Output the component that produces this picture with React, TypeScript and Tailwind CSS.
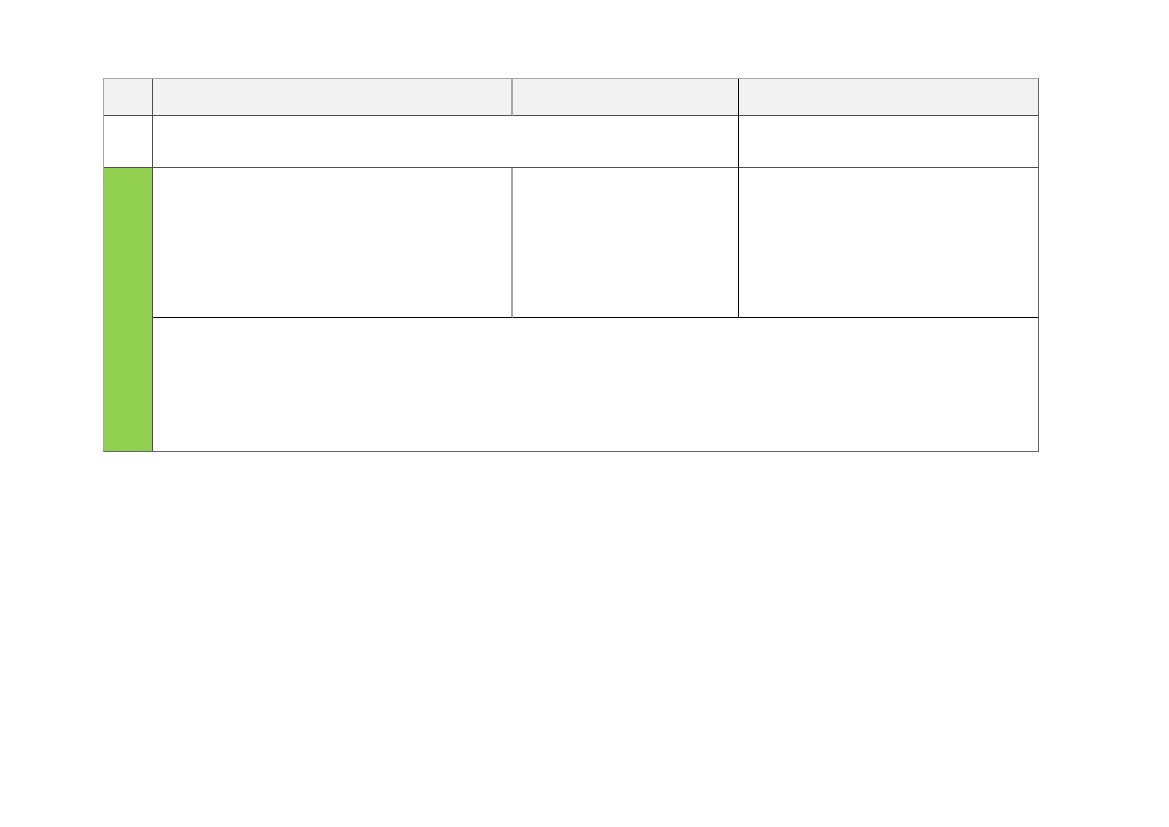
export default function App() {
  return (
    <div className="min-h-screen w-full bg-white pt-[78px] pl-[103px]">
      <div className="grid w-[936px] grid-cols-[49px_360px_226px_299px] grid-rows-[37px_52px_150px_133px] border border-t-[#a6a6a6] border-l-[#a6a6a6] border-r-[#666666] border-b-[#666666]">
        {/* header */}
        <div className="border-r border-b border-r-[#4d4d4d] border-b-[#4d4d4d] bg-[#f2f2f2]" />
        <div className="border-r-2 border-b border-r-[#a6a6a6] border-b-[#4d4d4d] bg-[#f2f2f2]" />
        <div className="border-r border-b border-r-black border-b-[#4d4d4d] bg-[#f2f2f2]" />
        <div className="border-b border-b-[#4d4d4d] bg-[#f2f2f2]" />

        {/* row 2 */}
        <div className="border-r border-b border-r-[#4d4d4d] border-b-[#4d4d4d]" />
        <div className="col-span-2 border-r border-b border-r-black border-b-[#4d4d4d]" />
        <div className="border-b border-b-[#4d4d4d]" />

        {/* row 3 */}
        <div className="row-span-2 border-r border-r-[#4d4d4d] bg-[#92d050]" />
        <div className="border-r-2 border-b border-r-[#a6a6a6] border-b-black" />
        <div className="border-r border-b border-r-black border-b-black" />
        <div className="border-b border-b-black" />

        {/* row 4 */}
        <div className="col-span-3" />
      </div>
    </div>
  );
}
